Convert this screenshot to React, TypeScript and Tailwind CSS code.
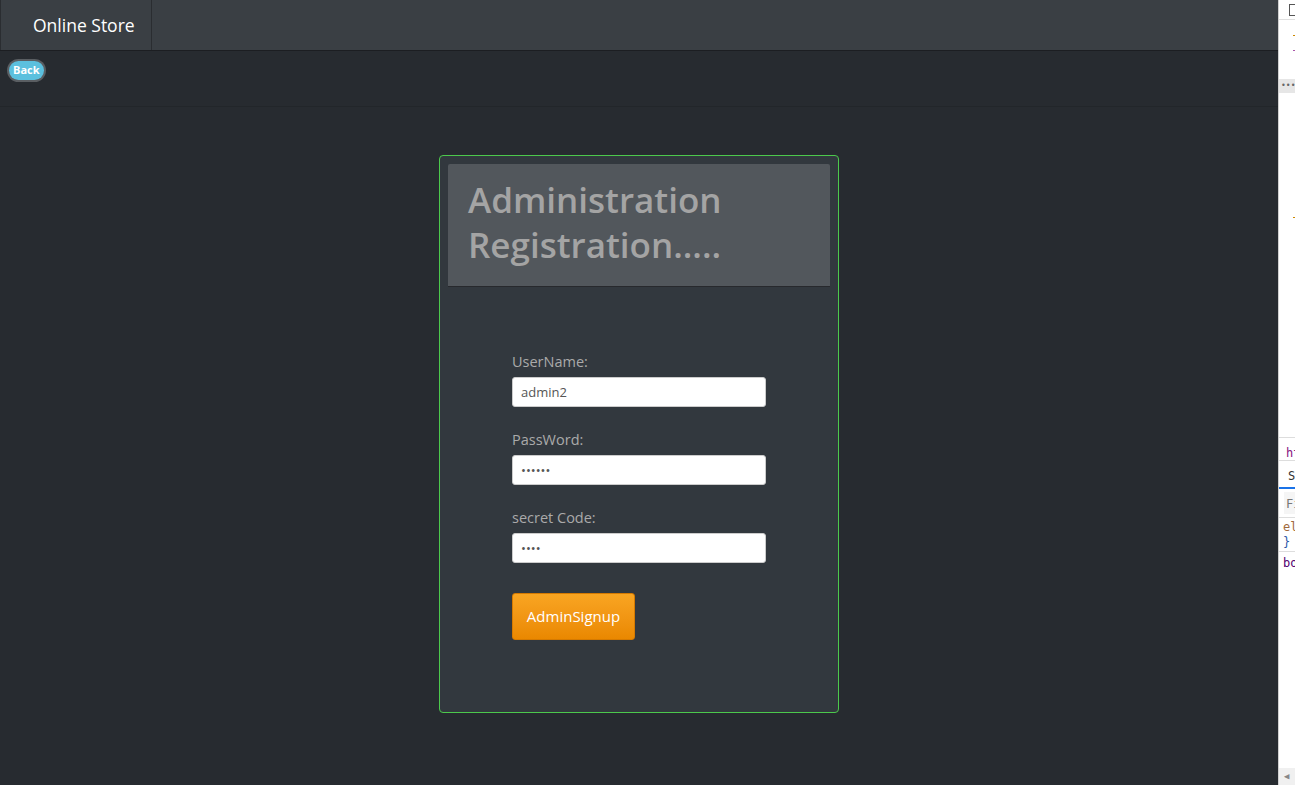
import { useState } from 'react'

const font = { fontFamily: '"Open Sans", "Noto Sans", "Liberation Sans", sans-serif' }

function Field({
  label,
  type,
  value,
  onChange,
}: {
  label: string
  type: string
  value: string
  onChange: (v: string) => void
}) {
  return (
    <div className="flex flex-col">
      <label className="text-[14.5px] leading-[20px] text-[#aaaaaa]">{label}</label>
      <input
        type={type}
        value={value}
        onChange={(e) => onChange(e.target.value)}
        className="mt-[5px] h-[30px] w-[254px] rounded-[3px] border border-[#cccccc] bg-white px-[8px] text-[13px] text-[#555555] outline-none"
      />
    </div>
  )
}

export default function App() {
  const [user, setUser] = useState('admin2')
  const [pass, setPass] = useState('123456')
  const [code, setCode] = useState('1234')

  return (
    <div className="flex h-[785px] w-[1295px] overflow-hidden bg-[#272b30]" style={font}>
      <div className="flex w-[1278px] flex-col">
        {/* navbar */}
        <nav className="flex h-[51px] border-b border-[#1c1e22] bg-[#3a3f44]">
          <div className="flex h-full w-[152px] items-center border-x border-[#2a2d31] pl-[32px] text-[17.5px] text-white">
            Online Store
          </div>
        </nav>

        {/* back bar */}
        <div className="h-[56px] border-b border-[#22262a] pl-[9px] pt-[10px]">
          <button className="flex h-[19px] items-center rounded-full bg-[#5bc0de] px-[4px] text-[11px] font-bold text-white shadow-[0_0_0_2px_#5a5e62]">
            Back
          </button>
        </div>

        {/* card */}
        <div className="flex justify-center pt-[48px]">
          <div className="h-[558px] w-[400px] rounded-[4px] border border-[#4cc94c] bg-[#32383e] p-[8px]">
            <div className="h-[123px] rounded-t-[2px] border-b border-[#27292d] bg-[#52575c] pl-[20px] pt-[13px]">
              <h1 className="text-[35px] font-semibold leading-[45px] text-[#a4a4a4]">
                Administration
                <br />
                Registration.....
              </h1>
            </div>
            <div className="flex flex-col gap-[23px] pl-[64px] pt-[65px]">
              <Field label="UserName:" type="text" value={user} onChange={setUser} />
              <Field label="PassWord:" type="password" value={pass} onChange={setPass} />
              <Field label="secret Code:" type="password" value={code} onChange={setCode} />
              <button className="mt-[7px] h-[47px] w-[123px] rounded-[3px] border border-[#d67a00] bg-gradient-to-b from-[#f9a521] to-[#ea8800] text-[15px] text-white">
                AdminSignup
              </button>
            </div>
          </div>
        </div>
      </div>

      {/* devtools sliver */}
      <aside className="relative w-[17px] border-l border-[#d0d0d0] bg-white text-[12px]" style={{ fontFamily: '"DejaVu Sans Mono", monospace' }}>
        <div className="h-[16px] border-b border-[#e0e0e0]">
          <div className="ml-[10px] mt-[4px] h-[12px] w-[8px] border border-[#555]" />
        </div>
        <div className="absolute left-[14px] top-[35px] h-[1px] w-[3px] bg-[#c80]" />
        <div className="absolute left-[14px] top-[50px] h-[1px] w-[3px] bg-[#a5a]" />
        <div className="absolute top-[79px] flex h-[14px] w-full items-center bg-[#e6e6e6] pl-[2px] text-[8px] leading-none text-[#666]">
          •••
        </div>
        <div className="absolute left-[14px] top-[217px] h-[1px] w-[3px] bg-[#c80]" />
        <div className="absolute top-[437px] w-full border-t border-[#ddd] pl-[7px] pt-[6px] text-[#881280]">ht</div>
        <div className="absolute top-[460px] w-full border-t border-[#ddd] pl-[9px] pt-[6px] text-[#333]">S</div>
        <div className="absolute top-[487px] h-[2px] w-full bg-[#1a73e8]" />
        <div className="absolute top-[492px] left-[5px] h-[22px] w-full bg-[#f5f5f5] pl-[2px] pt-[3px] text-[#777]">Fi</div>
        <div className="absolute top-[517px] w-full border-t border-[#ddd] pl-[4px] text-[#a06a3c]">el</div>
        <div className="absolute top-[533px] pl-[4px] text-[#2a57a8]">{'}'}</div>
        <div className="absolute top-[551px] w-full border-t border-[#ddd] pl-[4px] pt-[2px] text-[#520070]">bo</div>
        <div className="absolute bottom-0 left-0 flex h-[17px] w-full items-center bg-[#f0f0f0] pl-[5px] text-[9px] text-[#888]">◀</div>
      </aside>
    </div>
  )
}
